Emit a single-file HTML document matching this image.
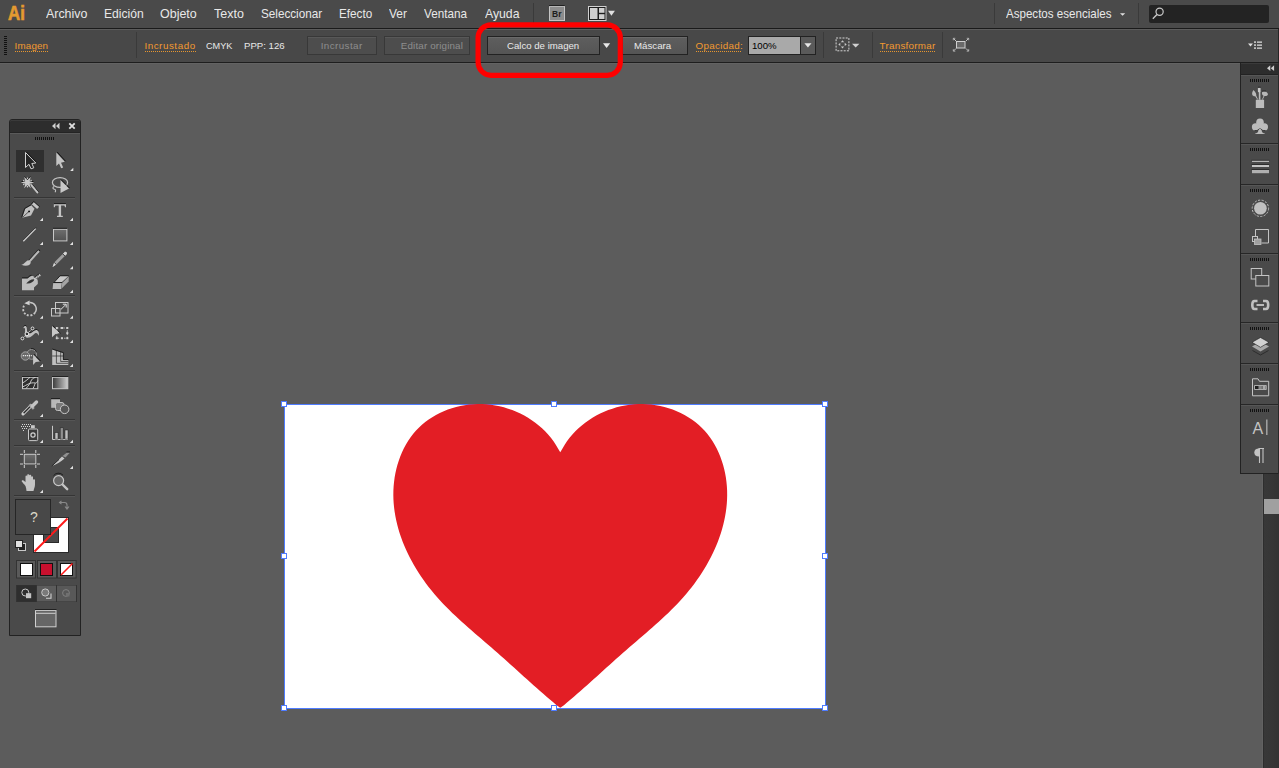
<!DOCTYPE html>
<html><head><meta charset="utf-8">
<style>
*{margin:0;padding:0;box-sizing:border-box}
html,body{width:1279px;height:768px;overflow:hidden;background:#5c5c5c;font-family:"Liberation Sans",sans-serif}
.a{position:absolute}
.t{white-space:nowrap;transform-origin:0 0;line-height:1}
.btn{position:absolute;height:19px;border:1px solid #222;background:linear-gradient(#5e5e5e,#555);box-shadow:inset 0 1px 0 #6a6a6a}
.dis{background:#4d4d4d;border-color:#383838;box-shadow:inset 0 1px 0 #585858}
.ul{position:absolute;height:1px;background-image:linear-gradient(90deg,#e8962e 50%,transparent 50%);background-size:2px 1px}
svg{position:absolute;left:0;top:0;overflow:visible}
</style></head><body>
<div class="a" style="left:0;top:0;width:1279px;height:28px;background:#4a4a4a"></div>
<div class="a" style="left:0;top:28px;width:1279px;height:1px;background:#1a1a1a"></div>
<div class="a" style="left:0;top:29px;width:1279px;height:1px;background:#5c5c5c"></div>
<div class="a" style="left:0;top:30px;width:1278px;height:32px;background:#484848"></div>
<div class="a" style="left:1278px;top:29px;width:1px;height:34px;background:#262626"></div>
<div class="a" style="left:0;top:62px;width:1279px;height:1px;background:#1e1e1e"></div>
<div class="a" style="left:0;top:63px;width:1279px;height:1px;background:#636363"></div>
<div class="a t" style="left:45.5px;top:7px;font-size:13px;color:#e8e8e8;transform:scaleX(0.955);">Archivo</div>
<div class="a t" style="left:103.5px;top:7px;font-size:13px;color:#e8e8e8;transform:scaleX(0.93);">Edición</div>
<div class="a t" style="left:159.5px;top:7px;font-size:13px;color:#e8e8e8;transform:scaleX(0.96);">Objeto</div>
<div class="a t" style="left:213.5px;top:7px;font-size:13px;color:#e8e8e8;transform:scaleX(0.96);">Texto</div>
<div class="a t" style="left:260.5px;top:7px;font-size:13px;color:#e8e8e8;transform:scaleX(0.9);">Seleccionar</div>
<div class="a t" style="left:339.0px;top:7px;font-size:13px;color:#e8e8e8;transform:scaleX(0.9);">Efecto</div>
<div class="a t" style="left:388.5px;top:7px;font-size:13px;color:#e8e8e8;transform:scaleX(0.92);">Ver</div>
<div class="a t" style="left:424.0px;top:7px;font-size:13px;color:#e8e8e8;transform:scaleX(0.9);">Ventana</div>
<div class="a t" style="left:485.0px;top:7px;font-size:13px;color:#e8e8e8;transform:scaleX(0.94);">Ayuda</div>
<div class="a t" style="left:1005.5px;top:6.5px;font-size:13px;color:#e8e8e8;transform:scaleX(0.89);">Aspectos esenciales</div>
<div class="a t" style="left:7.8px;top:1.9px;font-size:21px;font-weight:bold;color:#e49a30;-webkit-text-stroke:0.7px #e49a30;transform:scaleX(0.8);letter-spacing:0.3px">Ai</div>
<div class="a" style="left:533px;top:3px;width:1px;height:21px;background:#3a3a3a"></div>
<div class="a" style="left:994px;top:3px;width:1px;height:21px;background:#3a3a3a"></div>
<div class="a" style="left:1138px;top:3px;width:1px;height:21px;background:#3a3a3a"></div>
<div class="a" style="left:1149px;top:5px;width:120px;height:18px;background:#232323;border-radius:2px"></div>
<div class="a t" style="left:14.6px;top:40.7px;font-size:9.8px;color:#f39a30;letter-spacing:0.15px;transform:scaleX(1.0)">Imagen</div>
<div class="ul" style="left:15px;top:51px;width:33px"></div>
<div class="a" style="left:136px;top:32px;width:1px;height:26px;background:#3a3a3a"></div>
<div class="a t" style="left:144.4px;top:40.7px;font-size:9.8px;color:#f39a30;letter-spacing:0.55px;transform:scaleX(1.0)">Incrustado</div>
<div class="ul" style="left:145px;top:51px;width:51px"></div>
<div class="a t" style="left:205.6px;top:40.7px;font-size:9.8px;color:#e8e8e8;letter-spacing:0px;transform:scaleX(0.934)">CMYK</div>
<div class="a t" style="left:243.5px;top:40.7px;font-size:9.8px;color:#e8e8e8;letter-spacing:0px;transform:scaleX(0.98)">PPP: 126</div>
<div class="btn dis" style="left:307px;top:36px;width:70px"></div>
<div class="a t" style="left:320.7px;top:40.7px;font-size:9.8px;color:#8e8e8e;letter-spacing:0.43px;transform:scaleX(1.0)">Incrustar</div>
<div class="btn dis" style="left:384px;top:36px;width:86px"></div>
<div class="a t" style="left:400.8px;top:40.7px;font-size:9.8px;color:#8e8e8e;letter-spacing:0.157px;transform:scaleX(1.0)">Editar original</div>
<div class="btn" style="left:487px;top:36px;width:113px"></div>
<div class="a t" style="left:506.8px;top:40.7px;font-size:9.8px;color:#eaeaea;letter-spacing:0px;transform:scaleX(0.982)">Calco de imagen</div>
<div class="btn" style="left:622px;top:36px;width:66px"></div>
<div class="a t" style="left:634px;top:40.7px;font-size:9.8px;color:#eaeaea;letter-spacing:0px;transform:scaleX(0.99)">Máscara</div>
<div class="a t" style="left:695.6px;top:40.7px;font-size:9.8px;color:#f39a30;letter-spacing:0.31px;transform:scaleX(1.0)">Opacidad:</div>
<div class="ul" style="left:696px;top:51px;width:46px"></div>
<div class="a" style="left:748px;top:36px;width:68px;height:19px;background:#222"></div>
<div class="a" style="left:749px;top:37px;width:51px;height:17px;background:#a9a9a9"></div>
<div class="a" style="left:801px;top:37px;width:14px;height:17px;background:#5a5a5a"></div>
<div class="a t" style="left:752.2px;top:40.7px;font-size:9.8px;color:#000;letter-spacing:0px;transform:scaleX(0.98)">100%</div>
<div class="a" style="left:823px;top:32px;width:1px;height:26px;background:#3a3a3a"></div>
<div class="a" style="left:872px;top:32px;width:1px;height:26px;background:#3a3a3a"></div>
<div class="a" style="left:942px;top:32px;width:1px;height:26px;background:#3a3a3a"></div>
<div class="a t" style="left:879.6px;top:40.7px;font-size:9.8px;color:#f39a30;letter-spacing:0.257px;transform:scaleX(1.0)">Transformar</div>
<div class="ul" style="left:880px;top:51px;width:55px"></div>
<svg width="1279" height="768">
<rect x="284.5" y="404.5" width="541" height="304" fill="#fff" stroke="#4f7cff" stroke-width="1"/>
<path d="M560.25 452.30 L558.14 448.68 L555.93 444.91 L553.52 441.28 L550.91 437.79 L548.12 434.46 L545.15 431.28 L542.02 428.25 L538.73 425.38 L535.31 422.68 L531.74 420.14 L528.05 417.78 L524.25 415.59 L520.35 413.57 L516.35 411.74 L512.26 410.09 L508.10 408.63 L503.88 407.37 L499.60 406.29 L495.28 405.42 L490.93 404.75 L486.55 404.29 L482.16 404.03 L477.76 403.99 L473.37 404.17 L469.00 404.56 L464.66 405.15 L460.35 405.96 L456.10 406.97 L451.91 408.18 L447.79 409.59 L443.75 411.20 L439.81 413.00 L435.98 415.00 L432.26 417.18 L428.67 419.54 L425.22 422.09 L421.93 424.83 L418.79 427.73 L415.82 430.82 L413.04 434.07 L410.44 437.49 L408.04 441.05 L405.81 444.76 L403.77 448.58 L401.92 452.51 L400.25 456.54 L398.76 460.65 L397.45 464.82 L396.33 469.05 L395.39 473.32 L394.62 477.62 L394.04 481.93 L393.63 486.25 L393.39 490.57 L393.33 494.88 L393.43 499.19 L393.69 503.49 L394.11 507.78 L394.68 512.06 L395.39 516.32 L396.26 520.56 L397.26 524.78 L398.39 528.98 L399.66 533.15 L401.06 537.29 L402.57 541.39 L404.21 545.47 L405.96 549.50 L407.82 553.49 L409.79 557.44 L411.85 561.35 L414.02 565.20 L416.28 569.01 L418.62 572.76 L421.06 576.45 L423.57 580.08 L426.16 583.66 L428.82 587.16 L431.55 590.60 L434.34 593.97 L437.19 597.26 L440.10 600.50 L443.06 603.67 L446.07 606.79 L449.12 609.86 L452.22 612.88 L455.35 615.86 L458.51 618.81 L461.70 621.72 L464.92 624.61 L468.17 627.48 L471.42 630.32 L474.70 633.16 L477.98 635.99 L481.27 638.81 L484.57 641.64 L487.86 644.47 L491.15 647.31 L494.44 650.17 L497.71 653.05 L500.97 655.94 L504.23 658.85 L507.48 661.76 L510.73 664.69 L513.97 667.61 L517.22 670.55 L520.46 673.48 L523.71 676.41 L526.96 679.34 L530.21 682.26 L533.47 685.18 L536.74 688.08 L540.01 690.97 L543.30 693.84 L546.59 696.70 L549.90 699.54 L553.23 702.35 L556.57 705.14 L560.25 707.80 L563.93 705.14 L567.27 702.35 L570.60 699.54 L573.91 696.70 L577.20 693.84 L580.49 690.97 L583.76 688.08 L587.03 685.18 L590.29 682.26 L593.54 679.34 L596.79 676.41 L600.04 673.48 L603.28 670.55 L606.53 667.61 L609.77 664.69 L613.02 661.76 L616.27 658.85 L619.53 655.94 L622.79 653.05 L626.06 650.17 L629.35 647.31 L632.64 644.47 L635.93 641.64 L639.23 638.81 L642.52 635.99 L645.80 633.16 L649.08 630.32 L652.33 627.48 L655.58 624.61 L658.80 621.72 L661.99 618.81 L665.15 615.86 L668.28 612.88 L671.38 609.86 L674.43 606.79 L677.44 603.67 L680.40 600.50 L683.31 597.26 L686.16 593.97 L688.95 590.60 L691.68 587.16 L694.34 583.66 L696.93 580.08 L699.44 576.45 L701.88 572.76 L704.22 569.01 L706.48 565.20 L708.65 561.35 L710.71 557.44 L712.68 553.49 L714.54 549.50 L716.29 545.47 L717.93 541.39 L719.44 537.29 L720.84 533.15 L722.11 528.98 L723.24 524.78 L724.24 520.56 L725.11 516.32 L725.82 512.06 L726.39 507.78 L726.81 503.49 L727.07 499.19 L727.17 494.88 L727.11 490.57 L726.87 486.25 L726.46 481.93 L725.88 477.62 L725.11 473.32 L724.17 469.05 L723.05 464.82 L721.74 460.65 L720.25 456.54 L718.58 452.51 L716.73 448.58 L714.69 444.76 L712.46 441.05 L710.06 437.49 L707.46 434.07 L704.68 430.82 L701.71 427.73 L698.57 424.83 L695.28 422.09 L691.83 419.54 L688.24 417.18 L684.52 415.00 L680.69 413.00 L676.75 411.20 L672.71 409.59 L668.59 408.18 L664.40 406.97 L660.15 405.96 L655.84 405.15 L651.50 404.56 L647.13 404.17 L642.74 403.99 L638.34 404.03 L633.95 404.29 L629.57 404.75 L625.22 405.42 L620.90 406.29 L616.62 407.37 L612.40 408.63 L608.24 410.09 L604.15 411.74 L600.15 413.57 L596.25 415.59 L592.45 417.78 L588.76 420.14 L585.19 422.68 L581.77 425.38 L578.48 428.25 L575.35 431.28 L572.38 434.46 L569.59 437.79 L566.98 441.28 L564.57 444.91 L562.36 448.68Z" fill="#e31e25"/>
<g fill="#fff" stroke="#4f7cff" stroke-width="1">
<rect x="281.5" y="401.5" width="5" height="5"/>
<rect x="281.5" y="553.5" width="5" height="5"/>
<rect x="281.5" y="705.5" width="5" height="5"/>
<rect x="551.5" y="401.5" width="5" height="5"/>
<rect x="551.5" y="705.5" width="5" height="5"/>
<rect x="822.5" y="401.5" width="5" height="5"/>
<rect x="822.5" y="553.5" width="5" height="5"/>
<rect x="822.5" y="705.5" width="5" height="5"/>
</g>
<rect x="478.1" y="24.8" width="142.2" height="50.5" rx="13" fill="none" stroke="#ff0000" stroke-width="5.2"/>
</svg>
<div class="a" style="left:9px;top:119px;width:72px;height:517px;background:#4a4a4a;border:1px solid #222;border-radius:3px 3px 0 0"></div>
<div class="a" style="left:10px;top:120px;width:70px;height:13px;background:#2d2d2d;border-top:1px solid #3a3a3a;border-bottom:1px solid #242424;border-radius:2px 2px 0 0"></div>
<div class="a" style="left:10px;top:133px;width:70px;height:1px;background:#5a5a5a"></div>
<div class="a" style="left:16px;top:150px;width:28px;height:22px;background:#2f2f2f"></div>
<div class="a" style="left:14px;top:197px;width:61px;height:1px;background:#353535"></div>
<div class="a" style="left:14px;top:198px;width:61px;height:1px;background:#555"></div>
<div class="a" style="left:14px;top:295px;width:61px;height:1px;background:#353535"></div>
<div class="a" style="left:14px;top:296px;width:61px;height:1px;background:#555"></div>
<div class="a" style="left:14px;top:370px;width:61px;height:1px;background:#353535"></div>
<div class="a" style="left:14px;top:371px;width:61px;height:1px;background:#555"></div>
<div class="a" style="left:14px;top:419px;width:61px;height:1px;background:#353535"></div>
<div class="a" style="left:14px;top:420px;width:61px;height:1px;background:#555"></div>
<div class="a" style="left:14px;top:445px;width:61px;height:1px;background:#353535"></div>
<div class="a" style="left:14px;top:446px;width:61px;height:1px;background:#555"></div>
<div class="a" style="left:14px;top:495px;width:61px;height:1px;background:#353535"></div>
<div class="a" style="left:14px;top:496px;width:61px;height:1px;background:#555"></div>
<svg width="1279" height="768">
<defs><linearGradient id="gIcon" x1="0" y1="0" x2="0" y2="1"><stop offset="0" stop-color="#d8d8d8"/><stop offset="1" stop-color="#a8a8a8"/></linearGradient><linearGradient id="gRect" x1="0" y1="0" x2="0" y2="1"><stop offset="0" stop-color="#6e6e6e"/><stop offset="1" stop-color="#525252"/></linearGradient><linearGradient id="gGrad" x1="0" y1="0" x2="1" y2="0"><stop offset="0" stop-color="#3a3a3a"/><stop offset="1" stop-color="#d0d0d0"/></linearGradient></defs>
<rect x="35" y="137" width="1" height="3" fill="#111"/>
<rect x="37" y="137" width="1" height="3" fill="#111"/>
<rect x="39" y="137" width="1" height="3" fill="#111"/>
<rect x="41" y="137" width="1" height="3" fill="#111"/>
<rect x="43" y="137" width="1" height="3" fill="#111"/>
<rect x="45" y="137" width="1" height="3" fill="#111"/>
<rect x="47" y="137" width="1" height="3" fill="#111"/>
<rect x="49" y="137" width="1" height="3" fill="#111"/>
<rect x="51" y="137" width="1" height="3" fill="#111"/>
<rect x="53" y="137" width="1" height="3" fill="#111"/>
<path d="M52 126L55.5 122.8V129.2Z M56 126L59.5 122.8V129.2Z" fill="#cfcfcf"/>
<path d="M69.3 123.3L74.7 128.7M74.7 123.3L69.3 128.7" stroke="#e0e0e0" stroke-width="1.8"/>
<path d="M25.5 152.5L25.5 167.5L29 164.3L31 168.8L33.8 167.8L31.8 163.5L35.8 163Z" fill="#262626" stroke="#d2d2d2" stroke-width="1" stroke-linejoin="miter"/>
<path d="M26.5 152L36.3 162.2" stroke="#111" stroke-width="0.9"/>
<path d="M56.3 152.5L56.3 166L59 163.6L61.2 168.3L63.2 167.6L61 162.8L64.8 161.8Z" fill="#c4c4c4"/>
<path d="M57.2 152L65.5 161.2" stroke="#111" stroke-width="0.9"/>
<path d="M73.3 167.8L73.3 171L70.1 171Z" fill="#e0e0e0"/>
<path d="M34.05 182.50L29.70 183.80L30.75 188.22L27.45 185.10L24.15 188.22L25.20 183.80L20.85 182.50L25.20 181.20L24.15 176.78L27.45 179.90L30.75 176.78L29.70 181.20Z" fill="#111" transform="translate(0,-0.9)"/>
<path d="M34.05 182.50L29.70 183.80L30.75 188.22L27.45 185.10L24.15 188.22L25.20 183.80L20.85 182.50L25.20 181.20L24.15 176.78L27.45 179.90L30.75 176.78L29.70 181.20Z" fill="#c8c8c8"/>
<circle cx="27.45" cy="186.70" r="0.75" fill="#d8d8d8"/>
<circle cx="23.81" cy="184.60" r="0.75" fill="#d8d8d8"/>
<circle cx="23.81" cy="180.40" r="0.75" fill="#d8d8d8"/>
<circle cx="27.45" cy="178.30" r="0.75" fill="#d8d8d8"/>
<circle cx="31.09" cy="180.40" r="0.75" fill="#d8d8d8"/>
<circle cx="31.09" cy="184.60" r="0.75" fill="#d8d8d8"/>
<path d="M31.6 185.4L37.6 192.4" stroke="#111" stroke-width="1" transform="translate(0.8,-0.7)"/>
<path d="M31.6 185.4L37.4 192.4" stroke="#c4c4c4" stroke-width="1.9" stroke-linecap="round"/>
<ellipse cx="60" cy="182.5" rx="7.6" ry="4.8" fill="none" stroke="#c4c4c4" stroke-width="1.2"/>
<path d="M54 186.5c-1.5 1 -1.5 2.5 0.5 2.8c1.2 0.2 1.5 1.5 0.5 3" fill="none" stroke="#c4c4c4" stroke-width="1.1"/>
<path d="M60.5 180L69 188.5L60.5 193Z" fill="#c8c8c8"/>
<path d="M61 179.5L69.5 188" stroke="#111" stroke-width="0.9"/>
<path d="M22.2 217.8L25.2 208.8L31.3 205.3L34.5 208.8L31 215.5Z" fill="#c0c0c0"/>
<path d="M21.7 217.3L24.7 208.4L31 204.8" fill="none" stroke="#111" stroke-width="0.8"/>
<path d="M22.6 217.4L29 211.4" stroke="#2a2a2a" stroke-width="0.7"/>
<circle cx="29.1" cy="211.4" r="0.95" fill="#111"/>
<path d="M31.8 204.3L34 201.9L39.3 206.7L37.1 209.1Z" fill="#c4c4c4"/>
<path d="M33.6 201.4L39.8 206.9M31.4 204L33.6 201.5" fill="none" stroke="#111" stroke-width="0.8"/>
<path d="M43 217.8L43 221L39.8 221Z" fill="#e0e0e0"/>
<path d="M53.8 204.2H66V207.2H65.1L64.4 205.6H61.1V215.8H62.8V217H57V215.8H58.7V205.6H55.4L54.7 207.2H53.8Z" fill="#c4c4c4"/>
<path d="M54 203.5H65.8" stroke="#111" stroke-width="0.7"/>
<path d="M73 217.8L73 221L69.8 221Z" fill="#e0e0e0"/>
<path d="M23.3 241.2L35.7 228.6" stroke="#111" stroke-width="1" transform="translate(0,-0.9)"/>
<path d="M23.3 241.2L35.7 228.6" stroke="#d0d0d0" stroke-width="1.3"/>
<path d="M43 241.8L43 245L39.8 245Z" fill="#e0e0e0"/>
<rect x="53.5" y="229.3" width="13.4" height="11.6" fill="url(#gRect)" stroke="#c8c8c8" stroke-width="1"/>
<path d="M53 228.3H67" stroke="#111" stroke-width="0.8"/>
<path d="M73 241.8L73 245L69.8 245Z" fill="#e0e0e0"/>
<path d="M29.5 261.5L38.5 251.5" stroke="#111" stroke-width="2.8" stroke-linecap="round" transform="translate(0.2,-0.6)"/>
<path d="M29.5 261.5L38.5 251.5" stroke="#b8b8b8" stroke-width="2.2" stroke-linecap="round"/>
<path d="M21.3 264.8C24 264.6 25.5 260.8 28.5 260.2L30.8 262.5C30.5 265.5 26 266.8 21.3 264.8Z" fill="#c4c4c4"/>
<path d="M52.6 267L54.2 262.5L64.5 252.2C65.7 251 67.7 253 66.6 254.2L56.3 264.5Z" fill="#a0a0a0"/>
<path d="M52.6 267L54.2 262.5L56.3 264.5Z" fill="#d8d8d8"/>
<path d="M62.8 253.9L64.5 252.2C65.7 251 67.7 253 66.6 254.2L64.9 256Z" fill="#d4d4d4"/>
<path d="M54.2 262.5L56.3 264.5M62.8 253.9L64.9 256" stroke="#1a1a1a" stroke-width="0.8"/>
<path d="M73 266.0L73 269.2L69.8 269.2Z" fill="#e0e0e0"/>
<path d="M22 278.5H27.5C28.5 278.5 29.5 276 31.5 276C34.5 276 37.8 278.5 37.8 281V284L34 287.6V290.2H22Z" fill="#bcbcbc"/>
<path d="M22 277.8H27.3C28.3 277.8 29.3 275.3 31.5 275.3" fill="none" stroke="#111" stroke-width="0.8"/>
<path d="M26.2 283.4C28 281.2 31 279 34.5 279.2C33.5 282 30 284.2 26.2 283.4Z" fill="#333"/>
<path d="M34.3 279L40.2 274.8" stroke="#d0d0d0" stroke-width="2.2"/>
<path d="M35.5 277.2L36.5 279M37 276.2L38 278M38.5 275.2L39.5 277" stroke="#222" stroke-width="0.6"/>
<path d="M33.8 277.8L39.2 273.8" stroke="#111" stroke-width="0.7"/>
<path d="M54.3 282.1L60.2 276H68.6L61.9 282.1Z" fill="#c8c8c8"/>
<path d="M53.2 283L61.8 283L61 289H52.6Z" fill="#bababa"/>
<path d="M62.2 283L68.8 276.5L68.6 281.5L61.2 289Z" fill="#a4a4a4"/>
<path d="M54 282.5L60 275.8H68.7M53.5 282.6H62" fill="none" stroke="#111" stroke-width="0.8"/>
<path d="M73 289.8L73 293L69.8 293Z" fill="#e0e0e0"/>
<path d="M29.5 302.6A6.3 6.3 0 0 1 35 312.6" fill="none" stroke="#c4c4c4" stroke-width="1.5"/>
<path d="M35 312.6A6.3 6.3 0 1 1 24.2 305.5" fill="none" stroke="#c4c4c4" stroke-width="1.8" stroke-dasharray="2 1.5"/>
<path d="M24.3 303.2L29.6 300.6L29.6 305.2Z" fill="#d0d0d0"/>
<path d="M43 315.6L43 318.8L39.8 318.8Z" fill="#e0e0e0"/>
<rect x="55.5" y="302.5" width="12.5" height="10.5" fill="#4a4a4a" stroke="#c8c8c8" stroke-width="1"/>
<rect x="51.5" y="308.5" width="8.5" height="7.5" fill="none" stroke="#c8c8c8" stroke-width="1"/>
<path d="M60.8 309.5L65.8 304.6M62.8 304.2H66.2V307.6" fill="none" stroke="#e0e0e0" stroke-width="1"/>
<path d="M73 315.6L73 318.8L69.8 318.8Z" fill="#e0e0e0"/>
<path d="M23.5 327.5C24 325.5 26.5 325.5 26.8 327.5L27.2 332C28.5 334 31 333.5 33 331.5C35 329.5 37.5 329.5 38.5 331.5C39.2 333 39 335 38.6 335.8C38 334 37 332.5 35.5 333C33.5 334.5 31.5 337.5 27.5 337.8C25.5 337.8 24.6 336 24.8 333.5L25 329C25 328 24 327.8 23.5 328.5Z" fill="#111" transform="translate(0,-0.8)"/>
<path d="M23.5 327.5C24 325.5 26.5 325.5 26.8 327.5L27.2 332C28.5 334 31 333.5 33 331.5C35 329.5 37.5 329.5 38.5 331.5C39.2 333 39 335 38.6 335.8C38 334 37 332.5 35.5 333C33.5 334.5 31.5 337.5 27.5 337.8C25.5 337.8 24.6 336 24.8 333.5L25 329C25 328 24 327.8 23.5 328.5Z" fill="#bdbdbd"/>
<path d="M22.4 338.5L32.5 328.4" stroke="#f0f0f0" stroke-width="0.9" stroke-dasharray="1 0.9"/>
<circle cx="26.9" cy="333.9" r="1.8" fill="#333" stroke="#f0f0f0" stroke-width="0.9"/>
<circle cx="32.5" cy="328.4" r="1.4" fill="#333" stroke="#f0f0f0" stroke-width="0.9"/>
<circle cx="22.4" cy="338.5" r="1.4" fill="#333" stroke="#f0f0f0" stroke-width="0.9"/>
<path d="M43 339.8L43 343L39.8 343Z" fill="#e0e0e0"/>
<path d="M52 326V337.3L55.5 334L60 333Z" fill="#c8c8c8"/>
<path d="M52.8 325.6L60.5 333.2" stroke="#111" stroke-width="0.9"/>
<rect x="56.8" y="328" width="10.5" height="10.2" fill="none" stroke="#c8c8c8" stroke-width="0.9" stroke-dasharray="1.6 1.6"/>
<rect x="55.8" y="327" width="2" height="2" fill="#d0d0d0"/>
<rect x="61" y="327" width="2" height="2" fill="#d0d0d0"/>
<rect x="66.3" y="327" width="2" height="2" fill="#d0d0d0"/>
<rect x="66.3" y="332.1" width="2" height="2" fill="#d0d0d0"/>
<rect x="55.8" y="337.2" width="2" height="2" fill="#d0d0d0"/>
<rect x="61" y="337.2" width="2" height="2" fill="#d0d0d0"/>
<rect x="66.3" y="337.2" width="2" height="2" fill="#d0d0d0"/>
<path d="M73 339.8L73 343L69.8 343Z" fill="#e0e0e0"/>
<circle cx="31.6" cy="354.4" r="4.9" fill="#5a5a5a" stroke="#a0a0a0" stroke-width="0.9"/>
<path d="M31 349.3A5 5 0 0 1 36.3 353" fill="none" stroke="#111" stroke-width="0.8" transform="translate(0,-0.7)"/>
<circle cx="25.4" cy="356" r="4.2" fill="#6a6a6a" stroke="#a8a8a8" stroke-width="0.9"/>
<path d="M22.8 355.6H31.8" stroke="#f4f4f4" stroke-width="1.1" stroke-dasharray="1.1 0.9"/>
<path d="M33.1 354.4V365L35.8 362L39.9 361.6Z" fill="#c4c4c4"/>
<path d="M33.8 354L40.5 361" stroke="#111" stroke-width="0.9"/>
<path d="M43 363.8L43 367L39.8 367Z" fill="#e0e0e0"/>
<path d="M52.2 349.4L63.1 352.9V359.9H68.3V365H52.2Z" fill="#c0c0c0"/>
<path d="M56.4 350.5V363.3M60.7 351.8V361.5M52.2 356H63.1M56.4 363.3H68.3M60.7 361.5H68.3" stroke="#2a2a2a" stroke-width="0.7"/>
<path d="M52.2 349L63.3 352.6V359.6H68.5" fill="none" stroke="#111" stroke-width="0.8"/>
<path d="M73 363.8L73 367L69.8 367Z" fill="#e0e0e0"/>
<rect x="22.5" y="377.3" width="15.3" height="11.4" fill="#2e2e2e" stroke="#c8c8c8" stroke-width="1"/>
<path d="M22.5 383C26 381 28 379 30 377.3M22.5 387C27 385 30 382 35.5 383C37 383.2 37.5 381 37.8 380.5M26 388.5C28 386 30 384 31 381C31.5 379.5 33 378 35.5 377.3M33 388.5C34.5 386 35 383 35.5 383" fill="none" stroke="#d8d8d8" stroke-width="0.9"/>
<path d="M22 376.5H38.3" stroke="#111" stroke-width="0.8"/>
<rect x="52.5" y="377.3" width="15.3" height="11.4" fill="url(#gGrad)" stroke="#c8c8c8" stroke-width="1"/>
<path d="M52 376.5H68.3" stroke="#111" stroke-width="0.8"/>
<path d="M23 413.8L31 405.8" stroke="#d0d0d0" stroke-width="3.2" stroke-linecap="round"/>
<path d="M23.6 413.2L31 405.8" stroke="#2a2a2a" stroke-width="1.4"/>
<path d="M29.5 404.5L33.8 408.8" stroke="#a8a8a8" stroke-width="2.6"/>
<path d="M32.5 406L36.5 402" stroke="#c4c4c4" stroke-width="3.4" stroke-linecap="round"/>
<path d="M43 413.8L43 417L39.8 417Z" fill="#e0e0e0"/>
<rect x="51.2" y="399.2" width="8.8" height="8.6" fill="#b8b8b8"/>
<path d="M51 398.6H60" stroke="#111" stroke-width="0.8"/>
<rect x="55.5" y="402.5" width="8.5" height="8" rx="2" fill="#7a7a7a" stroke="#c0c0c0" stroke-width="1"/>
<circle cx="64.6" cy="409.3" r="4.3" fill="#555" stroke="#c8c8c8" stroke-width="1"/>
<rect x="22" y="424" width="1" height="1" fill="#d8d8d8"/>
<rect x="24" y="424" width="1" height="1" fill="#d8d8d8"/>
<rect x="26" y="424" width="1" height="1" fill="#d8d8d8"/>
<rect x="28" y="424" width="1" height="1" fill="#d8d8d8"/>
<rect x="30" y="424" width="1" height="1" fill="#d8d8d8"/>
<rect x="21" y="426" width="1" height="1" fill="#d8d8d8"/>
<rect x="23" y="426" width="1" height="1" fill="#d8d8d8"/>
<rect x="25" y="426" width="1" height="1" fill="#d8d8d8"/>
<rect x="27" y="426" width="1" height="1" fill="#d8d8d8"/>
<rect x="29" y="426" width="1" height="1" fill="#d8d8d8"/>
<rect x="22" y="428" width="1" height="1" fill="#d8d8d8"/>
<rect x="24" y="428" width="1" height="1" fill="#d8d8d8"/>
<rect x="26" y="428" width="1" height="1" fill="#d8d8d8"/>
<rect x="23" y="430" width="1" height="1" fill="#d8d8d8"/>
<rect x="31" y="425.2" width="3.8" height="3" fill="#c8c8c8"/>
<rect x="28.5" y="429" width="9.2" height="11.6" rx="1" fill="#3a3a3a" stroke="#c8c8c8" stroke-width="1"/>
<circle cx="33" cy="435" r="2.1" fill="none" stroke="#d0d0d0" stroke-width="1.2"/>
<path d="M43 439.8L43 443L39.8 443Z" fill="#e0e0e0"/>
<path d="M52.5 425.8V439.5H68" fill="none" stroke="#c8c8c8" stroke-width="1"/>
<rect x="55" y="432.6" width="3" height="6.5" fill="#c0c0c0" stroke="#222" stroke-width="0.5"/>
<rect x="60.2" y="427.8" width="3" height="11.3" fill="#909090" stroke="#222" stroke-width="0.5"/>
<rect x="65" y="430" width="3" height="9.1" fill="#c0c0c0" stroke="#222" stroke-width="0.5"/>
<path d="M73 439.8L73 443L69.8 443Z" fill="#e0e0e0"/>
<rect x="24.3" y="454.3" width="11.5" height="9.6" fill="url(#gRect)" stroke="#c8c8c8" stroke-width="1"/>
<path d="M24.3 450V453M35.8 450V453M24.3 465V468M35.8 465V468M20 454.3H23M37 454.3H40M20 464H23M37 464H40" stroke="#d0d0d0" stroke-width="1"/>
<path d="M51.8 466L59 459.5L62 456.5L64.5 458.5C61 461.5 57 464.5 51.8 466Z" fill="#c8c8c8"/>
<path d="M62.5 456L67 452.5H70L65.5 457.5Z" fill="#909090"/>
<path d="M51.8 466L59 459.5M66.5 452H70" stroke="#111" stroke-width="0.8"/>
<path d="M73 465.8L73 469L69.8 469Z" fill="#e0e0e0"/>
<path d="M25.5 486C24 484 22.5 482.5 21.8 481.5C21.2 480.6 22.5 479.8 23.5 480.5L25.5 482V476.5C25.5 475.3 27.2 475.3 27.2 476.5V475C27.2 474 29.2 474 29.2 475V475.5C29.2 474.5 31.2 474.5 31.2 475.5V477C31.2 476 33 476 33 477V480C33 479 35 479 35 480V484.5C35 487 34 488.5 33.5 491H26.5C26.3 489 26 487.5 25.5 486Z" fill="#c4c4c4"/>
<path d="M43 489.8L43 493L39.8 493Z" fill="#e0e0e0"/>
<path d="M62 484L67.2 489.2" stroke="#c4c4c4" stroke-width="2.4" stroke-linecap="round"/>
<circle cx="58.6" cy="480.6" r="5" fill="#666" stroke="#c8c8c8" stroke-width="1.2"/>
<path d="M53.5 475.8A6 6 0 0 1 63 475.2" fill="none" stroke="#111" stroke-width="0.8"/>
</svg>
<svg width="1279" height="768">
<rect x="33.5" y="517.5" width="35" height="35" fill="#fff" stroke="#2a2a2a" stroke-width="1"/>
<rect x="43.5" y="527.5" width="15" height="15" fill="#4a4a4a" stroke="#2a2a2a" stroke-width="1"/>
<path d="M34.5 551.5L67.5 518.5" stroke="#ff1a1a" stroke-width="2"/>
<rect x="15.5" y="499.5" width="35" height="35" fill="#484848" stroke="#262626" stroke-width="1"/>
<text x="30" y="522" font-family="Liberation Sans" font-size="14" fill="#dcd8c8">?</text>
<path d="M60 502.5H64.5C66.5 502.5 67 504 67 505V508M65 506.5L67 509L69 506.5M61.5 500.8L59.5 502.5L61.5 504.2" fill="none" stroke="#8a8a8a" stroke-width="1.1"/>
<rect x="18.5" y="543.5" width="7" height="7" fill="#222" stroke="#c8c8c8" stroke-width="1"/>
<rect x="15.5" y="540.5" width="7" height="7" fill="#e0e0e0" stroke="#222" stroke-width="1"/>
<rect x="16.5" y="560.5" width="19" height="17.5" fill="#5a5a5a" stroke="#333" stroke-width="1"/>
<rect x="37.5" y="560.5" width="19" height="17.5" fill="#5a5a5a" stroke="#333" stroke-width="1"/>
<rect x="57.5" y="560.5" width="18.6" height="17.5" fill="#5a5a5a" stroke="#333" stroke-width="1"/>
<rect x="20.5" y="563.5" width="12" height="12" fill="#fff" stroke="#111" stroke-width="1"/>
<rect x="40.5" y="563.5" width="12" height="12" fill="#c8102e" stroke="#111" stroke-width="1"/>
<rect x="60.5" y="563.5" width="12" height="12" fill="#fff" stroke="#111" stroke-width="1"/>
<path d="M61 575L72.5 563.5" stroke="#ff1a1a" stroke-width="1.6"/>
<rect x="16" y="585" width="61" height="17" fill="#333"/>
<rect x="17" y="585.5" width="19" height="16" fill="#2e2e2e"/>
<rect x="37" y="585.5" width="19" height="16" fill="#5c5c5c"/>
<rect x="57" y="585.5" width="19" height="16" fill="#585858"/>
<circle cx="25.3" cy="592.5" r="3.5" fill="none" stroke="#c8c8c8" stroke-width="1"/>
<rect x="26" y="593.2" width="5.2" height="5" fill="#c4c4c4"/>
<circle cx="45.3" cy="592.5" r="3.6" fill="#7a7a7a" stroke="#c8c8c8" stroke-width="1"/>
<path d="M46 598.2H51V593.5" fill="none" stroke="#d0d0d0" stroke-width="1.1"/>
<circle cx="66" cy="593" r="3.4" fill="none" stroke="#808080" stroke-width="1"/>
<rect x="66" y="593" width="3.5" height="3.5" fill="#707070"/>
<rect x="35.5" y="610.5" width="20.5" height="16.3" fill="#666" stroke="#d0d0d0" stroke-width="1"/>
<path d="M36 613.3H55.5" stroke="#d0d0d0" stroke-width="1"/>
<path d="M35 609.6H56.5" stroke="#111" stroke-width="0.8"/>
</svg>
<div class="a" style="left:1262px;top:63px;width:1px;height:705px;background:#626262"></div>
<div class="a" style="left:1263px;top:63px;width:16px;height:705px;background:linear-gradient(90deg,#2e2e2e 0,#2e2e2e 1px,#383838 1px,#363636 60%,#333 100%);"></div>
<div class="a" style="left:1264px;top:499px;width:15px;height:15px;background:#a0a0a0"></div>
<div class="a" style="left:1240px;top:63px;width:39px;height:411px;background:#4a4a4a;border:1px solid #222;border-right:none"></div>
<div class="a" style="left:1241px;top:63px;width:37px;height:12px;background:#2d2d2d;border-top:1px solid #3a3a3a;border-bottom:1px solid #222"></div>
<div class="a" style="left:1241px;top:143px;width:38px;height:1px;background:#262626"></div>
<div class="a" style="left:1241px;top:144px;width:37px;height:1px;background:#565656"></div>
<div class="a" style="left:1241px;top:184px;width:38px;height:1px;background:#262626"></div>
<div class="a" style="left:1241px;top:185px;width:37px;height:1px;background:#565656"></div>
<div class="a" style="left:1241px;top:253px;width:38px;height:1px;background:#262626"></div>
<div class="a" style="left:1241px;top:254px;width:37px;height:1px;background:#565656"></div>
<div class="a" style="left:1241px;top:322px;width:38px;height:1px;background:#262626"></div>
<div class="a" style="left:1241px;top:323px;width:37px;height:1px;background:#565656"></div>
<div class="a" style="left:1241px;top:363px;width:38px;height:1px;background:#262626"></div>
<div class="a" style="left:1241px;top:364px;width:37px;height:1px;background:#565656"></div>
<div class="a" style="left:1241px;top:404px;width:38px;height:1px;background:#262626"></div>
<div class="a" style="left:1241px;top:405px;width:37px;height:1px;background:#565656"></div>
<div class="a" style="left:1241px;top:75px;width:37px;height:1px;background:#565656"></div>
<div class="a" style="left:1278px;top:63px;width:1px;height:411px;background:#2a2a2a"></div>
<svg width="1279" height="768">
<rect x="1250" y="79" width="1" height="3" fill="#111"/><rect x="1252" y="79" width="1" height="3" fill="#111"/><rect x="1254" y="79" width="1" height="3" fill="#111"/><rect x="1256" y="79" width="1" height="3" fill="#111"/><rect x="1258" y="79" width="1" height="3" fill="#111"/><rect x="1260" y="79" width="1" height="3" fill="#111"/><rect x="1262" y="79" width="1" height="3" fill="#111"/><rect x="1264" y="79" width="1" height="3" fill="#111"/><rect x="1266" y="79" width="1" height="3" fill="#111"/><rect x="1268" y="79" width="1" height="3" fill="#111"/>
<rect x="1250" y="148" width="1" height="3" fill="#111"/><rect x="1252" y="148" width="1" height="3" fill="#111"/><rect x="1254" y="148" width="1" height="3" fill="#111"/><rect x="1256" y="148" width="1" height="3" fill="#111"/><rect x="1258" y="148" width="1" height="3" fill="#111"/><rect x="1260" y="148" width="1" height="3" fill="#111"/><rect x="1262" y="148" width="1" height="3" fill="#111"/><rect x="1264" y="148" width="1" height="3" fill="#111"/><rect x="1266" y="148" width="1" height="3" fill="#111"/><rect x="1268" y="148" width="1" height="3" fill="#111"/>
<rect x="1250" y="189" width="1" height="3" fill="#111"/><rect x="1252" y="189" width="1" height="3" fill="#111"/><rect x="1254" y="189" width="1" height="3" fill="#111"/><rect x="1256" y="189" width="1" height="3" fill="#111"/><rect x="1258" y="189" width="1" height="3" fill="#111"/><rect x="1260" y="189" width="1" height="3" fill="#111"/><rect x="1262" y="189" width="1" height="3" fill="#111"/><rect x="1264" y="189" width="1" height="3" fill="#111"/><rect x="1266" y="189" width="1" height="3" fill="#111"/><rect x="1268" y="189" width="1" height="3" fill="#111"/>
<rect x="1250" y="258" width="1" height="3" fill="#111"/><rect x="1252" y="258" width="1" height="3" fill="#111"/><rect x="1254" y="258" width="1" height="3" fill="#111"/><rect x="1256" y="258" width="1" height="3" fill="#111"/><rect x="1258" y="258" width="1" height="3" fill="#111"/><rect x="1260" y="258" width="1" height="3" fill="#111"/><rect x="1262" y="258" width="1" height="3" fill="#111"/><rect x="1264" y="258" width="1" height="3" fill="#111"/><rect x="1266" y="258" width="1" height="3" fill="#111"/><rect x="1268" y="258" width="1" height="3" fill="#111"/>
<rect x="1250" y="327" width="1" height="3" fill="#111"/><rect x="1252" y="327" width="1" height="3" fill="#111"/><rect x="1254" y="327" width="1" height="3" fill="#111"/><rect x="1256" y="327" width="1" height="3" fill="#111"/><rect x="1258" y="327" width="1" height="3" fill="#111"/><rect x="1260" y="327" width="1" height="3" fill="#111"/><rect x="1262" y="327" width="1" height="3" fill="#111"/><rect x="1264" y="327" width="1" height="3" fill="#111"/><rect x="1266" y="327" width="1" height="3" fill="#111"/><rect x="1268" y="327" width="1" height="3" fill="#111"/>
<rect x="1250" y="368" width="1" height="3" fill="#111"/><rect x="1252" y="368" width="1" height="3" fill="#111"/><rect x="1254" y="368" width="1" height="3" fill="#111"/><rect x="1256" y="368" width="1" height="3" fill="#111"/><rect x="1258" y="368" width="1" height="3" fill="#111"/><rect x="1260" y="368" width="1" height="3" fill="#111"/><rect x="1262" y="368" width="1" height="3" fill="#111"/><rect x="1264" y="368" width="1" height="3" fill="#111"/><rect x="1266" y="368" width="1" height="3" fill="#111"/><rect x="1268" y="368" width="1" height="3" fill="#111"/>
<rect x="1250" y="409" width="1" height="3" fill="#111"/><rect x="1252" y="409" width="1" height="3" fill="#111"/><rect x="1254" y="409" width="1" height="3" fill="#111"/><rect x="1256" y="409" width="1" height="3" fill="#111"/><rect x="1258" y="409" width="1" height="3" fill="#111"/><rect x="1260" y="409" width="1" height="3" fill="#111"/><rect x="1262" y="409" width="1" height="3" fill="#111"/><rect x="1264" y="409" width="1" height="3" fill="#111"/><rect x="1266" y="409" width="1" height="3" fill="#111"/><rect x="1268" y="409" width="1" height="3" fill="#111"/>
<path d="M1267 68.2L1270.3 65.3V71.1Z M1270.8 68.2L1274.1 65.3V71.1Z" fill="#cfcfcf"/>
<rect x="1255.8" y="99.7" width="8.3" height="8.3" fill="#bcbcbc"/>
<path d="M1253.5 90C1252.3 91.5 1251.8 93.5 1252.3 94.8C1252.8 96 1254.2 96.5 1255.2 96.2L1257.3 99.5L1258 99.2L1256.2 95.5C1256.5 94.5 1256 92.5 1253.5 90Z" fill="#b8b8b8"/>
<rect x="1258.8" y="91.5" width="1.6" height="8.2" fill="#bdbdbd"/>
<rect x="1257.9" y="87.8" width="2.7" height="4.5" rx="0.8" fill="#c8c8c8"/>
<path d="M1262 99.5L1263.6 95.8C1262.3 95.3 1261.8 94 1262 92.5C1262.5 91.5 1264.5 91.2 1266 91.8C1267.5 92.5 1268.2 94 1267.8 95C1267 96 1265 96.2 1264.5 96.1L1262.8 99.6Z" fill="#b8b8b8"/>
<path d="M1258 87.2H1260.5M1262.3 91H1266" stroke="#1a1a1a" stroke-width="0.7"/>
<circle cx="1260" cy="122.4" r="3.8" fill="#bcbcbc"/><circle cx="1255.6" cy="127" r="3.7" fill="#bcbcbc"/><circle cx="1264.3" cy="127" r="3.7" fill="#bcbcbc"/>
<path d="M1259 126L1261 126L1262 132C1263 133 1264.5 133.5 1265.2 134H1254.8C1255.5 133.5 1257 133 1258 132Z" fill="#bcbcbc"/>
<path d="M1254.5 130.5C1257 131 1258.5 130 1259.5 128.5M1260.5 128.5C1261.5 130 1263 131 1265.5 130.5" fill="none" stroke="#1a1a1a" stroke-width="0.8"/>
<rect x="1252" y="160.6" width="17" height="1.2" fill="#d0d0d0"/>
<rect x="1252" y="165" width="17" height="2" fill="#c4c4c4"/>
<rect x="1252" y="170" width="17" height="3.2" fill="#b0b0b0"/>
<path d="M1251.5 160.3H1269.3M1251.5 164.5H1269.3M1251.5 169.5H1269.3" stroke="#1a1a1a" stroke-width="0.6"/>
<circle cx="1260.4" cy="208.3" r="6.3" fill="#c0c0c0"/>
<circle cx="1260.4" cy="208.3" r="8.2" fill="none" stroke="#bdbdbd" stroke-width="1" stroke-dasharray="2.2 1.4"/>
<path d="M1255.5 236V229.5H1268.5V243H1261.5" fill="none" stroke="#c4c4c4" stroke-width="1"/>
<rect x="1252.5" y="236.5" width="5" height="5" fill="#4a4a4a" stroke="#c4c4c4" stroke-width="1"/>
<rect x="1254.5" y="239" width="6.5" height="5.5" fill="#a0a0a0" stroke="#c4c4c4" stroke-width="0.8"/>
<rect x="1251.2" y="268.5" width="10.5" height="10.5" fill="none" stroke="#c4c4c4" stroke-width="1"/>
<rect x="1255.8" y="275.5" width="13" height="10.5" fill="#4a4a4a" stroke="#c4c4c4" stroke-width="1"/>
<path d="M1257.5 301H1254.5C1253 301 1252.3 302.3 1252.3 305C1252.3 307.7 1253 309 1254.5 309H1257.5M1263 301H1266C1267.5 301 1268.2 302.3 1268.2 305C1268.2 307.7 1267.5 309 1266 309H1263" fill="none" stroke="#c0c0c0" stroke-width="2.6"/>
<path d="M1256.5 305H1264" stroke="#c8c8c8" stroke-width="1.8"/>
<path d="M1252 346.5L1260.5 341.5L1269 346.5L1260.5 351.5Z" fill="#a8a8a8"/>
<path d="M1252 342.3L1260.5 337.5L1269 342.3L1260.5 347.3Z" fill="#d0d0d0" stroke="#1a1a1a" stroke-width="0.6"/>
<path d="M1252.5 350.5L1260.5 355L1268.5 350.5" fill="none" stroke="#1a1a1a" stroke-width="0.6"/>
<path d="M1252.5 378.8H1258L1259.5 381.3H1268.7V395.8H1252.5Z" fill="none" stroke="#c4c4c4" stroke-width="1"/>
<rect x="1255" y="386" width="3" height="3" fill="#1e1e1e"/><rect x="1258.8" y="386" width="3" height="3" fill="#888"/><rect x="1262.6" y="386" width="3" height="3" fill="#aaa"/>
<path d="M1254.5 385.5H1266.3V389.5H1254.5Z" fill="none" stroke="#c4c4c4" stroke-width="0.8"/>
<text x="1252.5" y="434.3" font-family="Liberation Sans" font-size="16" fill="#c4c4c4">A</text>
<rect x="1266.3" y="419.5" width="1.1" height="15.5" fill="#c4c4c4"/>
<path d="M1259 448.5C1256 448.5 1254.3 450 1254.3 452.5C1254.3 455 1256 456.5 1259 456.5Z" fill="#c4c4c4"/>
<path d="M1259.5 448.5V463M1263 448.5V463M1258.5 448.5H1264" stroke="#c4c4c4" stroke-width="1.1"/>
</svg>
<svg width="1279" height="768">
<rect x="4" y="36" width="3" height="1" fill="#111"/>
<rect x="4" y="38" width="3" height="1" fill="#111"/>
<rect x="4" y="40" width="3" height="1" fill="#111"/>
<rect x="4" y="42" width="3" height="1" fill="#111"/>
<rect x="4" y="44" width="3" height="1" fill="#111"/>
<rect x="4" y="46" width="3" height="1" fill="#111"/>
<rect x="4" y="48" width="3" height="1" fill="#111"/>
<rect x="4" y="50" width="3" height="1" fill="#111"/>
<rect x="4" y="52" width="3" height="1" fill="#111"/>
<rect x="4" y="54" width="3" height="1" fill="#111"/>
<path d="M603 43.2H610.2L606.6 48Z" fill="#e8e8e8"/>
<path d="M804.4 43.2H811.5L807.95 47.6Z" fill="#e8e8e8"/>
<rect x="836.1" y="38" width="12.8" height="12.8" fill="none" stroke="#d4d4d4" stroke-width="1" stroke-dasharray="2 1.2"/>
<path d="M842.5 40.2L840.8 42.2H844.2Z M842.5 48.6L840.8 46.6H844.2Z M838.3 44.4L840.3 42.7V46.1Z M846.7 44.4L844.7 42.7V46.1Z" fill="#c8c8c8"/>
<path d="M852 43.8H859.4L855.7 47.5Z" fill="#d0d0d0"/>
<rect x="956.5" y="41.5" width="8.5" height="6.5" fill="#6a6a6a" stroke="#d0d0d0" stroke-width="1"/>
<path d="M953.5 38.5L956 41M968.5 38.5L966 41M953.5 51L956 48.5M968.5 51L966 48.5" stroke="#d0d0d0" stroke-width="0.9"/>
<path d="M953.3 40.3V38.3H955.3M966.7 38.3H968.7V40.3M953.3 49.2V51.2H955.3M966.7 51.2H968.7V49.2" fill="none" stroke="#c0c0c0" stroke-width="0.8"/>
<path d="M1248 43.5H1253L1250.5 46.5Z" fill="#e0e0e0"/>
<rect x="1254.2" y="41.3" width="1.6" height="1.6" fill="#e8e8e8"/><rect x="1254.2" y="44.3" width="1.6" height="1.6" fill="#e8e8e8"/><rect x="1254.2" y="47.3" width="1.6" height="1.6" fill="#e8e8e8"/>
<path d="M1257 42.1H1262M1257 45.1H1262M1257 48.1H1262" stroke="#e0e0e0" stroke-width="1.1"/>
<rect x="549.5" y="6.5" width="15" height="14" fill="#8c8c8c" stroke="#c4c4c4" stroke-width="1"/>
<path d="M549 5.6H564.6" stroke="#111" stroke-width="0.8"/>
<text x="552" y="17" font-family="Liberation Sans" font-size="8.5" font-weight="bold" fill="#1e1e1e">Br</text>
<rect x="588.5" y="6.5" width="17.5" height="14" fill="#1e1e1e" stroke="#d0d0d0" stroke-width="1"/>
<rect x="590" y="8" width="7.5" height="11" fill="#d0d0d0"/>
<rect x="599" y="8" width="5.5" height="4.8" fill="#d0d0d0"/>
<rect x="599" y="14.2" width="5.5" height="4.8" fill="#d0d0d0"/>
<path d="M608 10.7H614.9L611.45 15.8Z" fill="#e0e0e0"/>
<path d="M1120 13.3H1125.2L1122.6 15.8Z" fill="#e0e0e0"/>
<circle cx="1159.6" cy="11.7" r="3.6" fill="none" stroke="#c8c8c8" stroke-width="1.2"/>
<path d="M1157 14.6L1152.8 18.8" stroke="#c8c8c8" stroke-width="1.4"/>
</svg>
</body></html>
